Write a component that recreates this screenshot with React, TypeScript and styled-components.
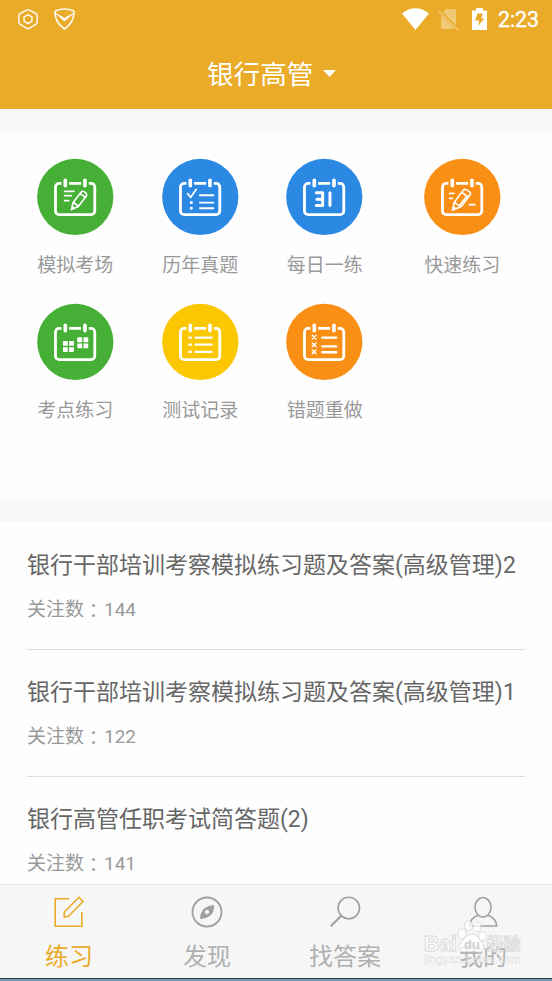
import React from "react";
import styled, { createGlobalStyle } from "styled-components";

const GlobalStyle = createGlobalStyle`
  * { box-sizing: border-box; }
  body {
    margin: 0;
    background: #fff;
    font-family: Roboto, "Noto Sans CJK SC", sans-serif;
  }
`;

const Screen = styled.div`
  width: 552px;
  height: 981px;
  display: flex;
  flex-direction: column;
  overflow: hidden;
  background: #fefefe;
`;

const Header = styled.header`
  height: 109px;
  flex: none;
  background: #eaab28;
  color: #fff;
`;

const StatusBar = styled.div`
  height: 39px;
  padding: 0 13px 0 16px;
  display: flex;
  justify-content: space-between;
`;

const StatusGroup = styled.div`
  display: flex;
  align-items: center;
`;

const Clock = styled.span`
  font-size: 21.3px;
  line-height: 40px;
  font-weight: 400;
  margin-left: 10px;
  -webkit-text-stroke: 0.3px #fff;
`;

const TitleRow = styled.div`
  height: 70px;
  padding: 2px 0 0 207px;
  display: flex;
  align-items: center;
  gap: 10px;
`;

const Title = styled.h1`
  margin: 0;
  font-size: 26.6px;
  line-height: 68px;
  font-weight: 400;
`;

const TitleCaret = styled.svg`
  margin-bottom: 3px;
`;

const Band = styled.div<{ $height: number }>`
  height: ${(p) => p.$height}px;
  flex: none;
  background: #f9f9f9;
`;

const Shortcuts = styled.section`
  height: 368px;
  flex: none;
  padding: 26.6px 0 0 12.7px;
  display: grid;
  grid-template-columns: 125px 125px 124px 151px;
  grid-auto-rows: 145px;
  align-content: start;
`;

const Shortcut = styled.div`
  display: flex;
  flex-direction: column;
  align-items: center;
`;

const CalendarSvg = styled.svg`
  flex: none;
  overflow: visible;
`;

const ShortcutLabel = styled.span`
  margin-top: 18px;
  font-size: 19px;
  line-height: 26px;
  color: #999;
`;

const List = styled.section`
  height: 362px;
  flex: none;
  padding: 1px 27px 0;
  overflow: hidden;
`;

const Row = styled.article`
  height: 127px;
  padding-top: 27px;
  border-bottom: 1px solid #dcdcdc;
`;

const RowTitle = styled.h2`
  margin: 0;
  font-size: 23px;
  line-height: 32px;
  font-weight: 400;
  color: #666;
  white-space: nowrap;
`;

const RowMeta = styled.p`
  margin: 14px 0 0;
  display: flex;
  font-size: 19px;
  line-height: 28px;
  color: #999;
`;

const Colon = styled.span`
  width: 20px;
  font-family: "Noto Sans CJK TC", sans-serif;
`;

const TabBar = styled.nav`
  height: 94px;
  flex: none;
  display: grid;
  grid-template-columns: repeat(4, 1fr);
  background: #f6f6f6;
  border-top: 1px solid #e2e2e2;
`;

const Tab = styled.div<{ $active?: boolean }>`
  position: relative;
  display: flex;
  flex-direction: column;
  align-items: center;
  padding-top: 10px;
  color: ${(p) => (p.$active ? "#eaab28" : "#b0b0b0")};
`;

const TabLabel = styled.span`
  margin-top: 10px;
  font-size: 24px;
  line-height: 36px;
`;

const BottomEdge = styled.div`
  height: 3px;
  flex: none;
  border-top: 1px solid #30404c;
  background: #7899b8;
`;

const Watermark = styled.div`
  position: absolute;
  left: 7px;
  top: 31px;
  width: 108px;
  height: 52px;
`;

type Kind = "exam" | "past" | "daily" | "quick" | "points" | "record" | "wrong";

function Marks({ kind, color }: { kind: Kind; color: string }) {
  switch (kind) {
    case "exam":
      return (
        <g>
          <path d="M83 97h28M83 110h20M83 125h12" strokeWidth="5.5" />
          <path d="M104 151l4-19 24-32q4-5 9-2l6 4q4 4 1 9l-24 32zM110 131l14 10M129 104l15 10" strokeWidth="5" />
          <path d="M104 151l2-10 7 6z" fill="#fff" strokeWidth="2" />
        </g>
      );
    case "past":
      return (
        <g>
          <path d="M77 104l9 11 17-24" strokeWidth="5" />
          <path d="M114 109h40M114 131h40M114 148h40" strokeWidth="6" />
          <path d="M84 131h8M84 148h8" strokeWidth="8" strokeLinecap="butt" />
        </g>
      );
    case "daily":
      return (
        <path d="M91 101h19v39H91M93 121h16M132 101v39" strokeWidth="9" strokeLinejoin="round" />
      );
    case "quick":
      return (
        <g>
          <path d="M77 103h13M77 118h8M136 137h16" strokeWidth="5.5" />
          <path d="M86 153l5-23 26-35q4-6 10-3l9 6q6 4 2 10l-26 35zM91 130l18 13M113 100l20 14M108 138l19-25" strokeWidth="5" />
          <path d="M86 153l2-11 8 6z" fill="#fff" strokeWidth="2" />
        </g>
      );
    case "points":
      return (
        <g stroke="none" fill="#fff">
          <rect x="78" y="111" width="33" height="33" rx="3" />
          <rect x="121" y="100" width="33" height="33" rx="3" />
          <path d="M94.5 110v35M77 127.500h35M137.500 99v35M120 116.500h35" stroke={color} strokeWidth="4" />
        </g>
      );
    case "record":
      return (
        <path d="M82 101h5M101 101h48M82 122h5M101 122h48M82 144h5M101 144h48" strokeWidth="7" />
      );
    case "wrong":
      return (
        <g>
          <path d="M109 101h42M109 127h42M109 145h42" strokeWidth="7" />
          <path
            d="M79 94l11 11M90 94l-11 11M79 117l11 11M90 117l-11 11M79 138l11 11M90 138l-11 11"
            strokeWidth="4.500"
          />
        </g>
      );
  }
}

function CalendarIcon({ kind, color }: { kind: Kind; color: string }) {
  return (
    <CalendarSvg width="76.6" height="76.6" viewBox="0 0 230 230" fill="none" stroke="#fff" strokeLinecap="round">
      <circle cx="115" cy="114" r="114.500" fill={color} stroke="none" />
      <rect x="55.500" y="73" width="118" height="94" rx="11" strokeWidth="8.500" />
      <path d="M85 65v18M144 65v18" stroke={color} strokeWidth="23" strokeLinecap="butt" />
      <path d="M85 64v16M144 64v16" strokeWidth="11" />
      <Marks kind={kind} color={color} />
    </CalendarSvg>
  );
}

const shortcuts: { kind: Kind; label: string; color: string }[] = [
  { kind: "exam", label: "模拟考场", color: "#46af35" },
  { kind: "past", label: "历年真题", color: "#2b89e4" },
  { kind: "daily", label: "每日一练", color: "#2b89e4" },
  { kind: "quick", label: "快速练习", color: "#f98f14" },
  { kind: "points", label: "考点练习", color: "#46af35" },
  { kind: "record", label: "测试记录", color: "#fbc700" },
  { kind: "wrong", label: "错题重做", color: "#f98f14" },
];

const papers = [
  { title: "银行干部培训考察模拟练习题及答案(高级管理)2", count: 144 },
  { title: "银行干部培训考察模拟练习题及答案(高级管理)1", count: 122 },
  { title: "银行高管任职考试简答题(2)", count: 141 },
];

const TabIcon = ({ children, color = "#a0a0a0" }: { children: React.ReactNode; color?: string }) => (
  <svg width="34" height="34" viewBox="0 0 34 34" fill="none" stroke={color} strokeWidth="1.6">
    {children}
  </svg>
);

export default function App() {
  return (
    <>
      <GlobalStyle />
      <Screen>
        <Header>
          <StatusBar>
            <StatusGroup>
              <svg width="64" height="39" viewBox="0 0 64 39" fill="none" stroke="#fff" strokeOpacity=".92" strokeWidth="1.5" strokeLinejoin="round">
                <path d="M10.500 10.200q1.500-.8 3 0l6.200 3.300q1.500.8 1.500 2.500v6q0 1.700-1.500 2.500l-6.200 3.700q-1.500.9-3 0l-6.200-3.700q-1.500-.8-1.500-2.500v-6q0-1.700 1.500-2.500z" />
                <path d="M12 14.700l3.900 2.200v4.400L12 23.500l-3.900-2.200v-4.400z" />
                <path d="M48.500 9q5 0 8.700 1.800.9.500.9 1.500-.3 10.500-9.600 16.700-9.300-6.200-9.600-16.700 0-1 .9-1.500Q43.500 9 48.500 9z" strokeWidth="1.700" />
                <path d="M39.800 13.500l8.700 7.500 8.700-7.500-8.700 4.700z" strokeWidth=".8" fill="#fff" />
              </svg>
            </StatusGroup>
            <StatusGroup>
              <svg width="86" height="39" viewBox="0 0 86 39" fill="#fff">
                <path d="M0 13.500Q13.500 2.800 27 13.500L13.500 30z" />
                <g opacity=".35">
                  <path d="M44 9h8q2 0 2 2v14.500L41 12zM39 14.500L53 29H41q-2 0-2-2z" />
                  <path d="M36.500 10.800L56 30.300" stroke="#fff" strokeWidth="1.500" />
                </g>
                <path d="M70 10.500h4V8h7v2.500h4V30H70z" />
                <path d="M75.500 13.500h5.500l-1.800 5h3.300L76 26l1.300-5.500H73z" fill="#eaab28" />
              </svg>
              <Clock>2:23</Clock>
            </StatusGroup>
          </StatusBar>
          <TitleRow>
            <Title>银行高管</Title>
            <TitleCaret width="13" height="7" viewBox="0 0 13 7" fill="#fff">
              <path d="M0 0h13L6.500 7z" />
            </TitleCaret>
          </TitleRow>
        </Header>
        <Band $height={23} />
        <Shortcuts>
          {shortcuts.map((s) => (
            <Shortcut key={s.label}>
              <CalendarIcon kind={s.kind} color={s.color} />
              <ShortcutLabel>{s.label}</ShortcutLabel>
            </Shortcut>
          ))}
        </Shortcuts>
        <Band $height={22} />
        <List>
          {papers.map((p) => (
            <Row key={p.title}>
              <RowTitle>{p.title}</RowTitle>
              <RowMeta>
                <span>关注数</span>
                <Colon lang="zh-TW">：</Colon>
                <span>{p.count}</span>
              </RowMeta>
            </Row>
          ))}
        </List>
        <TabBar>
          <Tab $active>
            <TabIcon color="#eaab28">
              <path d="M17 3.700H3.200v27.500h26.600V17" />
              <path d="M12.300 22v-5L27 2.300l4 4.200L16.300 21.500z" />
            </TabIcon>
            <TabLabel>练习</TabLabel>
          </Tab>
          <Tab>
            <TabIcon>
              <circle cx="17" cy="17" r="14.500" strokeWidth="1.800" />
              <path fillRule="evenodd" d="M24 10q.5 5.500-2.500 9.500-4 4-11.500 4.500 0-5.500 3.500-10Q18 10.500 24 10zM17 14.800a2.200 2.200 0 1 0 .01 0z" fill="#a0a0a0" stroke="none" />
            </TabIcon>
            <TabLabel>发现</TabLabel>
          </Tab>
          <Tab>
            <TabIcon>
              <circle cx="20.800" cy="13" r="10.700" />
              <path d="M13.200 20.800L2.700 31.300" strokeWidth="2" />
            </TabIcon>
            <TabLabel>找答案</TabLabel>
          </Tab>
          <Tab>
            <TabIcon>
              <ellipse cx="17" cy="12.300" rx="8" ry="9.800" />
              <path d="M12.300 20.300Q4 23 3.700 31h27Q30 23 21.700 20.300" />
            </TabIcon>
            <TabLabel>我的</TabLabel>
            <Watermark>
              <svg width="108" height="52" viewBox="0 0 108 52" fill="#fff" stroke="#d2d2d2" strokeWidth=".9" fontFamily="Liberation Sans, Noto Sans CJK SC, sans-serif">
                <g opacity=".8">
                  <ellipse cx="41" cy="18" rx="4" ry="5.200" />
                  <ellipse cx="47.500" cy="10" rx="4" ry="5" />
                  <ellipse cx="56" cy="11" rx="4" ry="5" />
                  <ellipse cx="61.500" cy="20" rx="4" ry="4.800" />
                  <path d="M51 18q5 0 7 5 5 4 5 8 0 6-6 5-6-1.500-12 0-7 0-7-5 0-4 5-8 3-5 8-5z" />
                  <text x="3" y="35" fontSize="22" fontWeight="700" textLength="33" lengthAdjust="spacingAndGlyphs">Bai</text>
                  <text x="65.500" y="34" fontSize="17" fontWeight="700">经验</text>
                </g>
                <text x="43" y="33" fontSize="13" fontWeight="700" fill="#cfcfcf" stroke="none">du</text>
                <text x="3" y="47" fontSize="11.500" fill="#fff" fillOpacity=".6" strokeWidth=".3" textLength="97" lengthAdjust="spacingAndGlyphs">jingyan.baidu.com</text>
              </svg>
            </Watermark>
          </Tab>
        </TabBar>
        <BottomEdge />
      </Screen>
    </>
  );
}
